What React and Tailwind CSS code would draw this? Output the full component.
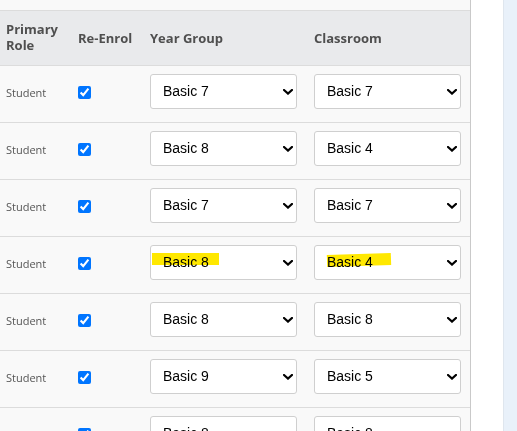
import React from 'react';

const rows = [
  { year: 'Basic 7', room: 'Basic 7' },
  { year: 'Basic 8', room: 'Basic 4' },
  { year: 'Basic 7', room: 'Basic 7' },
  { year: 'Basic 8', room: 'Basic 4', marked: true },
  { year: 'Basic 8', room: 'Basic 8' },
  { year: 'Basic 9', room: 'Basic 5' },
  { year: 'Basic 8', room: 'Basic 8' }
];

const options = ['Basic 4', 'Basic 5', 'Basic 6', 'Basic 7', 'Basic 8', 'Basic 9'];

function Chevron() {
  return (
    <svg
      className="absolute right-[4px] top-[15px] pointer-events-none"
      width="10"
      height="6"
      viewBox="0 0 10 6"
      fill="none"
    >
      <path d="M1 1l4 3.6L9 1" stroke="#000" strokeWidth="2.2" strokeLinecap="square" />
    </svg>
  );
}

function Picker({ value, mark }) {
  return (
    <div className="relative w-[147px] h-[35px] mb-[5px]">
      <select
        defaultValue={value}
        className="appearance-none w-full h-full bg-white border border-[#cfcfcf] rounded-[3px] pl-[12px] text-[14px] text-black font-['Liberation_Sans',Arial,sans-serif] outline-none"
      >
        {options.map((o) => (
          <option key={o} value={o}>
            {o}
          </option>
        ))}
      </select>
      <Chevron />
      {mark}
    </div>
  );
}

export default function App() {
  return (
    <div className="w-[517px] h-[431px] overflow-hidden flex bg-white font-['Open_Sans',sans-serif]">
      {/* Table panel */}
      <div className="w-[471px] shrink-0 bg-[#f9f9f9] border-r border-[#c9c9c9]">
        <div className="h-[10px]" />

        {/* Header */}
        <div className="flex items-center h-[56px] bg-[#e9eaec] border-y border-[#dcdcdc] text-[13px] font-bold text-[#4f4f4f] leading-[16px]">
          <div className="w-[72px] pl-[6px] mb-[2px]">
            <div>Primary</div>
            <div>Role</div>
          </div>
          <div className="w-[72px] pl-[6px]">Re-Enrol</div>
          <div className="w-[164px] pl-[6px]">Year Group</div>
          <div className="w-[162px] pl-[6px]">Classroom</div>
        </div>

        {/* Rows */}
        {rows.map((r, i) => (
          <div key={i} className="flex items-center h-[57px] border-b border-[#dcdcdc]">
            <div className="w-[72px] pl-[6px] mb-[2px] text-[11px] text-[#555]">Student</div>
            <div className="w-[72px] pl-[6px] flex">
              <input type="checkbox" defaultChecked className="w-[13px] h-[13px] m-0 mb-[3px]" />
            </div>
            <div className="w-[164px] pl-[6px]">
              <Picker
                value={r.year}
                mark={
                  r.marked && (
                    <span className="absolute left-[2px] top-[8px] w-[67px] h-[12px] bg-[#ffe800] mix-blend-multiply pointer-events-none" />
                  )
                }
              />
            </div>
            <div className="w-[162px] pl-[6px]">
              <Picker
                value={r.room}
                mark={
                  r.marked && (
                    <span className="absolute left-[13px] top-[9px] w-[64px] h-[12px] bg-[#ffe800] mix-blend-multiply -rotate-2 pointer-events-none" />
                  )
                }
              />
            </div>
          </div>
        ))}
      </div>

      {/* Side gutter */}
      <div className="w-[32px] shrink-0 bg-white" />
      <div className="flex-1 bg-[#e9f1fa] border-l border-[#dfe6ee]" />
    </div>
  );
}
